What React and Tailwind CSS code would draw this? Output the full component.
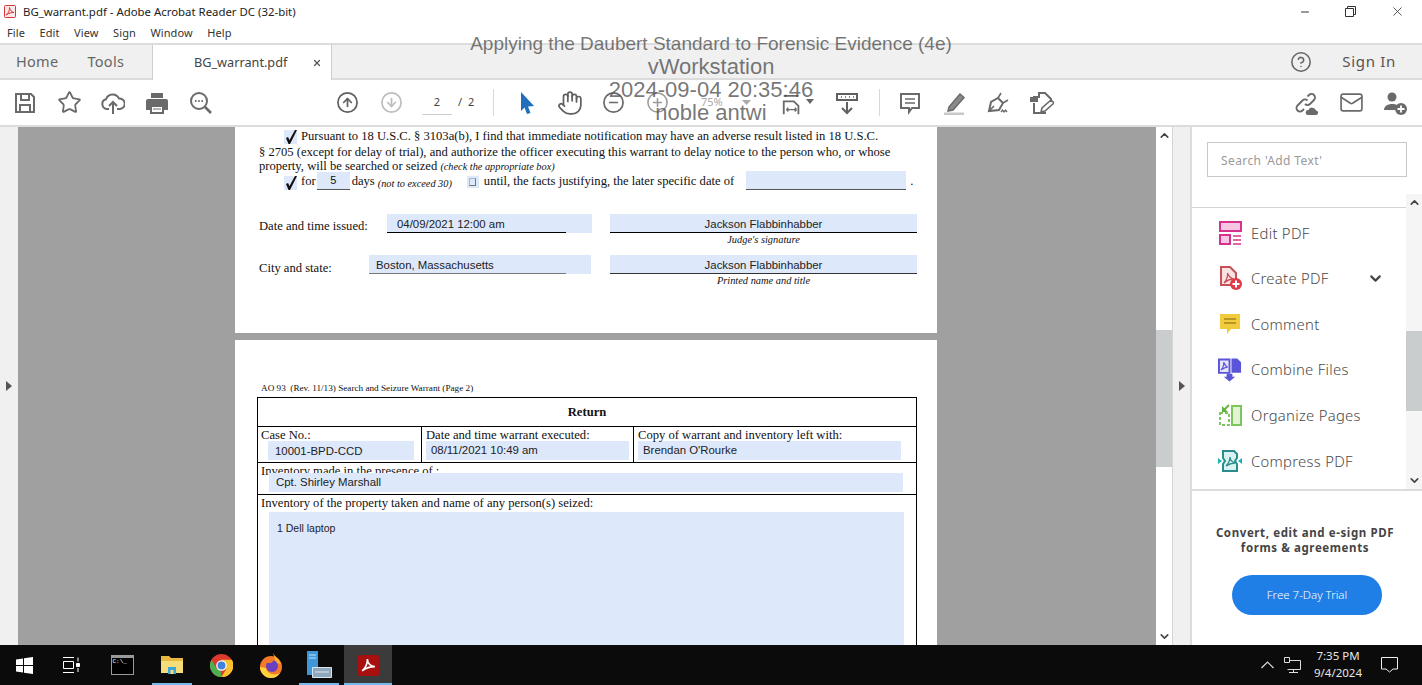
import { X, Minus, ChevronUp, ChevronDown, CircleArrowUp, CircleArrowDown, CircleMinus, CirclePlus, Hand, Star, CircleHelp, Mail } from 'lucide-react';

const uiFont = "font-['Noto_Sans',sans-serif]";
const serif = "font-['Liberation_Serif',serif]";
const arial = "font-['Liberation_Sans',sans-serif]";

function Cell({ children, className = '' }) {
  return <div className={`w-[44px] h-full flex items-center justify-center shrink-0 ${className}`}>{children}</div>;
}

function Glyph({ children, size = 24, view = 24, className = '' }) {
  return (
    <svg width={size} height={size} viewBox={`0 0 ${view} ${view}`} fill="none" stroke="#6a6a6a" strokeWidth="2" className={className}>
      {children}
    </svg>
  );
}

function Toolbar() {
  return (
    <div className="h-[47px] flex items-center pl-[3px] bg-white border-b-2 border-[#dcdcdc] shrink-0">
      <Cell>
        <Glyph>
          <path d="M3 3h15l3 3v15H3z" />
          <path d="M8 3v6h8V3M7 21v-7h10v7" />
        </Glyph>
      </Cell>
      <Cell><Star size={25} color="#6a6a6a" strokeWidth={1.7} /></Cell>
      <Cell>
        <Glyph>
          <path d="M8 18H6a5 5 0 0 1-1-9.8A7 7 0 0 1 18 7.5a5 5 0 0 1 1 10.5h-3" />
          <path d="M12 23V11M8 15l4-4 4 4" />
        </Glyph>
      </Cell>
      <Cell>
        <svg width="24" height="24" viewBox="0 0 24 24">
          <path fill="#6a6a6a" d="M6 2h12v5H6zM3 8h18a2 2 0 0 1 2 2v9h-4v-5H5v5H1v-9a2 2 0 0 1 2-2z" />
          <path fill="none" stroke="#6a6a6a" strokeWidth="2" d="M6 15h12v7H6z" />
          <path stroke="#6a6a6a" d="M8 18h8" />
        </svg>
      </Cell>
      <Cell>
        <Glyph>
          <circle cx="10" cy="10" r="8" />
          <path d="M16 16l6 6" strokeWidth="2.6" />
          <path d="M6 10h1.5M9.2 10h1.5M12.4 10h1.5" />
        </Glyph>
      </Cell>

      <Cell className="ml-[102px]"><CircleArrowUp size={23} color="#606060" strokeWidth={1.8} /></Cell>
      <Cell><CircleArrowDown size={23} color="#bdbdbd" strokeWidth={1.8} /></Cell>
      <div className={`w-[30px] h-[24px] ml-[9px] border-b border-[#cfcfcf] text-center text-[11px] leading-[22px] text-[#444] ${uiFont}`}>2</div>
      <span className={`ml-[6px] text-[11px] text-[#444] tracking-[1.5px] ${uiFont}`}>/ 2</span>
      <div className="w-px h-[27px] bg-[#d8d8d8] ml-[17px]" />

      <Cell className="ml-[11px]">
        <svg width="18" height="24" viewBox="0 0 18 24"><path fill="#1f6fbd" d="M3 1l13 14-6 .5L12.500 22 9 23 6.500 16.500 3 20z" /></svg>
      </Cell>
      <Cell className="-ml-px"><Hand size={26} color="#606060" strokeWidth={1.6} /></Cell>
      <Cell><CircleMinus size={23} color="#6a6a6a" strokeWidth={1.8} /></Cell>
      <Cell><CirclePlus size={23} color="#9a9a9a" strokeWidth={1.6} /></Cell>
      <div className={`w-[44px] ml-[10px] text-center text-[11px] text-[#aaa] ${uiFont}`}>75%</div>
      <svg width="9" height="5" viewBox="0 0 9 5" className="ml-[8px] mr-[30px]"><path fill="#aaa" d="M0 0h9L4.500 5z" /></svg>
      <Glyph size={22} className="mt-[4px]">
        <path d="M3 2h16M3 22V8h11l5 5v9" />
        <path d="M6 17h11M6 17l2-2M6 17l2 2M17 17l-2-2M17 17l-2 2" strokeWidth="1.500" />
      </Glyph>
      <svg width="8" height="5" viewBox="0 0 8 5" className="ml-[3px] mb-[2px]"><path fill="#666" d="M0 0h8L4 5z" /></svg>
      <Cell className="ml-[11px]">
        <svg width="24" height="24" viewBox="0 0 24 24" fill="none" stroke="#606060" strokeWidth="2">
          <path d="M2 3h20v6H2z" />
          <path d="M6 6h1M10 6h1M14 6h1M18 6h1" strokeWidth="1.500" />
          <path d="M12 11v11M7 17l5 5 5-5" />
        </svg>
      </Cell>
      <div className="w-px h-[27px] bg-[#d8d8d8] ml-[10px]" />
      <Cell className="ml-[8px]">
        <Glyph>
          <path d="M3 3h18v14h-7l-3 4v-4H3z" />
          <path d="M7 8h10M7 12h10" strokeWidth="1.500" />
        </Glyph>
      </Cell>
      <Cell>
        <Glyph>
          <path fill="#8a8a8a" stroke="#6a6a6a" strokeWidth="1.500" d="M7 16L18 3l4 3.500L11 19l-5 1z" />
          <path d="M2 23h20" stroke="#c8c8c8" strokeWidth="3" />
        </Glyph>
      </Cell>
      <Cell>
        <Glyph>
          <path d="M3 20l2-9 7-4 5 5-4 7z" />
          <path d="M12 7l3-5M17 12l5-3M3 20l5-5" strokeWidth="1.600" />
          <path d="M15 21l1.500-2 1.500 2 1.500-2 1.500 2" strokeWidth="1.300" />
        </Glyph>
      </Cell>
      <Cell>
        <Glyph>
          <path d="M4 12v10h12M4 8V6h5V2h6l6 6v3" />
          <path fill="#6a6a6a" stroke="none" d="M0 6h8v5H0z" />
          <path d="M11 21l1-4 9-8 3 3-9 8z" strokeWidth="1.600" />
        </Glyph>
      </Cell>

      <div className="flex-1" />
      <Cell>
        <Glyph>
          <path d="M9 18l-1.500 1.500a3.500 3.500 0 0 1-5-5l5-5a3.500 3.500 0 0 1 5 0M10 13a3.500 3.500 0 0 0 5 0l4-4a3.500 3.500 0 0 0-5-5l-1.500 1.500" strokeWidth="1.800" />
          <path fill="#6a6a6a" stroke="none" d="M13 24a2.500 2.500 0 0 1 .5-5 4 4 0 0 1 7.500 .5 2.300 2.300 0 0 1 .5 4.500z" />
        </Glyph>
      </Cell>
      <Cell><Mail size={25} color="#6a6a6a" strokeWidth={1.6} /></Cell>
      <Cell className="mr-[5px]">
        <svg width="24" height="24" viewBox="0 0 24 24">
          <circle cx="9" cy="6" r="4.500" fill="#6a6a6a" />
          <path fill="#6a6a6a" d="M1 19c0-4 4-6 8-6s5 1 6 2l-3 4z" />
          <circle cx="18" cy="18" r="6" fill="#6a6a6a" />
          <path stroke="#fff" strokeWidth="1.800" d="M18 14.500v7M14.500 18h7" />
        </svg>
      </Cell>
    </div>
  );
}

function Field({ children, className = '' }) {
  return <div className={`bg-[#dde8fb] text-[11.400px] leading-[19px] text-[#222] whitespace-nowrap ${arial} ${className}`}>{children}</div>;
}

function CheckMark() {
  return (
    <div className="w-[13px] h-[14px] bg-[#dde8fb] shrink-0 flex items-center justify-center">
      <svg width="12" height="14" viewBox="0 0 12 14"><path fill="#111" d="M1 8l2-1 1.500 3L10 0h2L5 14H3.500z" /></svg>
    </div>
  );
}

function PageOne() {
  return (
    <section className={`h-[206px] bg-white pl-[24px] pt-[2px] text-[12.600px] text-[#111] ${serif}`}>
      <div className="flex items-center h-[15px] pl-[25px] gap-[4px] whitespace-nowrap">
        <CheckMark />
        <span>Pursuant to 18 U.S.C. § 3103a(b), I find that immediate notification may have an adverse result listed in 18 U.S.C.</span>
      </div>
      <p className="h-[14px] leading-[14px] mt-[1px] whitespace-nowrap">§ 2705 (except for delay of trial), and authorize the officer executing this warrant to delay notice to the person who, or whose</p>
      <p className="h-[14px] leading-[14px] whitespace-nowrap">property, will be searched or seized <i className="text-[10.300px]">(check the appropriate box)</i></p>
      <div className="flex items-end h-[18px] -mt-px pl-[25px] whitespace-nowrap">
        <CheckMark />
        <span className="ml-[4px] -mb-px">for</span>
        <div className={`w-[33px] h-[18px] ml-px bg-[#dde8fb] border-b border-[#555] text-center text-[11px] leading-[16px] ${arial}`}>5</div>
        <span className="ml-[2px] -mb-px">days</span>
        <i className="ml-[3px] -mb-px text-[10.300px]">(not to exceed 30)</i>
        <div className="w-[12px] h-[12px] ml-[15px] mb-[2px] bg-[#dde8fb] flex items-center justify-center">
          <div className="w-[7px] h-[8px] border border-[#a9b7cc] border-r-[#777] border-b-[#777]" />
        </div>
        <span className="ml-[5px] -mb-px">until, the facts justifying, the later specific date of</span>
        <div className="w-[160px] h-[19px] ml-[12px] bg-[#dde8fb] border-b border-[#555]" />
        <span className="ml-[4px] -mb-px">.</span>
      </div>

      <div className="flex mt-[24px] h-[19px]">
        <span className="w-[128px] leading-[24px]">Date and time issued:</span>
        <Field className="w-[205px] pl-[10px] pt-px relative">
          04/09/2021 12:00 am
          <div className="absolute left-0 bottom-0 w-[179px] h-px bg-black" />
        </Field>
        <Field className="w-[307px] ml-[18px] pt-px text-center border-b border-black">Jackson Flabbinhabber</Field>
      </div>
      <div className="pl-[351px] w-[658px] text-center text-[10.400px] italic leading-[13px]">Judge's signature</div>

      <div className="flex mt-[9px] h-[19px]">
        <span className="w-[110px] leading-[26px]">City and state:</span>
        <Field className="w-[222px] pl-[7px] pt-px relative">
          Boston, Massachusetts
          <div className="absolute left-0 bottom-0 w-[197px] h-px bg-[#777]" />
        </Field>
        <Field className="w-[307px] ml-[19px] pt-px text-center border-b border-[#333]">Jackson Flabbinhabber</Field>
      </div>
      <div className="pl-[351px] w-[658px] text-center text-[10.400px] italic leading-[13px]">Printed name and title</div>
    </section>
  );
}

function PageTwo() {
  return (
    <section className={`h-[305px] mt-[7px] bg-white pt-[42px] pl-[22px] text-[12.600px] text-[#111] overflow-hidden ${serif}`}>
      <p className="pl-[4px] text-[9.200px] leading-[13px] whitespace-nowrap">AO 93 &nbsp;(Rev. 11/13) Search and Seizure Warrant (Page 2)</p>
      <div className="w-[660px] mt-[2px] border-t border-x border-black">
        <div className="h-[29px] pt-px flex items-center justify-center font-bold border-b border-black">Return</div>
        <div className="h-[36px] flex border-b border-black">
          <div className="w-[164px] border-r border-black pl-[3px]">
            <div className="leading-[14px] mt-px">Case No.:</div>
            <Field className="w-[146px] ml-[7px] mt-[-1px] pl-[7px] pt-px h-[19px]">10001-BPD-CCD</Field>
          </div>
          <div className="w-[212px] border-r border-black pl-[4px]">
            <div className="leading-[14px] mt-px">Date and time warrant executed:</div>
            <Field className="w-[203px] -mt-px pl-[5px] h-[19px]">08/11/2021 10:49 am</Field>
          </div>
          <div className="flex-1 pl-[4px]">
            <div className="leading-[14px] mt-px">Copy of warrant and inventory left with:</div>
            <Field className="w-[263px] -mt-px pl-[5px] h-[19px]">Brendan O'Rourke</Field>
          </div>
        </div>
        <div className="h-[32px] border-b border-black pl-[3px] overflow-hidden">
          <div className="leading-[14px] h-[9px] mt-px">Inventory made in the presence of :</div>
          <Field className="w-[634px] ml-[8px] pl-[7px] h-[19px] relative">Cpt. Shirley Marshall</Field>
        </div>
        <div className="pl-[3px]">
          <div className="leading-[14px] mt-px">Inventory of the property taken and name of any person(s) seized:</div>
          <Field className="w-[635px] ml-[8px] mt-[2px] pl-[8px] pt-[7px] h-[200px] !text-[10.500px]">1 Dell laptop</Field>
        </div>
      </div>
    </section>
  );
}

function Arrow({ dir }) {
  return dir === 'up'
    ? <ChevronUp size={13} color="#444" strokeWidth={3} />
    : <ChevronDown size={13} color="#444" strokeWidth={3} />;
}

function Caret() {
  return <div className="w-0 h-0 border-y-[5px] border-y-transparent border-l-[6px] border-l-[#555]" />;
}

function ToolIcon({ name }) {
  if (name === 'edit') return (
    <svg width="23" height="24" viewBox="0 0 23 24">
      <rect x="1" y="1" width="21" height="9" fill="#f7c6e2" stroke="#d6318c" strokeWidth="2" />
      <rect x="1" y="14" width="10" height="9" fill="#f7c6e2" stroke="#d6318c" strokeWidth="2" />
      <path stroke="#d6318c" strokeWidth="1.500" d="M14 15h8M14 19h8M14 23h8" />
    </svg>
  );
  if (name === 'create') return (
    <svg width="23" height="24" viewBox="0 0 23 24">
      <path fill="#fbe3e3" stroke="#c4525a" strokeWidth="2" d="M2 1h9l6 6v12H2z" />
      <path fill="none" stroke="#c4525a" strokeWidth="1.300" d="M5 17c3-3 4-8 3.500-10 1 3 3 5 6 6-3 0-6 1-9.500 4z" />
      <circle cx="17" cy="18" r="6" fill="#e03a46" />
      <path stroke="#fff" strokeWidth="2" d="M17 14.500v7M13.500 18h7" />
    </svg>
  );
  if (name === 'comment') return (
    <svg width="22" height="24" viewBox="0 0 22 24">
      <path fill="#f2cb3c" d="M1 2h20v15h-9l-4 5v-5H1z" />
      <path stroke="#a8861a" strokeWidth="1.500" d="M5 7h12M5 11h12" />
    </svg>
  );
  if (name === 'combine') return (
    <svg width="25" height="25" viewBox="0 0 25 25">
      <path fill="#e6e4fb" stroke="#5a55d8" strokeWidth="2" d="M1 2h11v14H1z" />
      <path fill="#5a55d8" d="M14 1h6l4 4v11H14z" />
      <path fill="none" stroke="#5a55d8" strokeWidth="1.200" d="M3 13c3-2 3-5 3-8 1 3 2 4 4 5-2 0-4 1-7 3z" />
      <path fill="#5a55d8" d="M9 17h6v3h3l-6 5-6-5h3z" />
    </svg>
  );
  if (name === 'organize') return (
    <svg width="23" height="22" viewBox="0 0 23 22">
      <rect x="13" y="2" width="9" height="19" fill="#e3f3d5" stroke="#7fc65a" strokeWidth="2" />
      <path fill="none" stroke="#7fc65a" strokeWidth="2" strokeDasharray="3 2" d="M1 9h9v12H1z" />
      <path stroke="#62b53c" strokeWidth="2" d="M10 1L5 6" />
      <path fill="#62b53c" d="M3 2v6h6z" />
    </svg>
  );
  return (
    <svg width="24" height="22" viewBox="0 0 24 22">
      <path fill="#d8f3f1" stroke="#2c8c8c" strokeWidth="2" d="M5 1h11l3 3v4l-2 3 2 3v7H5v-7l2-3-2-3z" />
      <path fill="none" stroke="#2c8c8c" strokeWidth="1.300" d="M8 16c3-3 4-6 4-9 0 3 2 5 5 6-3 0-6 1-9 3z" />
      <path fill="#17b5b5" d="M0 8l4 3-4 3zM24 8l-4 3 4 3z" />
    </svg>
  );
}

const tools = [
  ['edit', 'Edit PDF'],
  ['create', 'Create PDF'],
  ['comment', 'Comment'],
  ['combine', 'Combine Files'],
  ['organize', 'Organize Pages'],
  ['compress', 'Compress PDF'],
];

function SidePanel() {
  return (
    <aside className={`w-[232px] shrink-0 bg-white border-l-2 border-[#dcdcdc] flex flex-col ${uiFont}`}>
      <div className="h-[81px] shrink-0 pl-[15px] pt-[15px] border-b border-[#d4d4d4] relative">
        <div className="w-[200px] h-[35px] border border-[#c8c8c8] pl-[13px] text-[12px] leading-[35px] tracking-[0.4px] text-[#999]">Search 'Add Text'</div>
      </div>
      <div className="h-[283px] shrink-0 flex border-b-2 border-[#dcdcdc]">
        <ul className="flex-1 pt-[2px]">
          {tools.map(([icon, label]) => (
            <li key={label} className="h-[45.600px] flex items-center pl-[26px]">
              <div className="w-[24px] flex justify-center"><ToolIcon name={icon} /></div>
              <span className="ml-[9px] text-[14.800px] font-light tracking-[0.3px] text-[#4a4a4a]">{label}</span>
              {icon === 'create' && <ChevronDown size={17} strokeWidth={3} color="#444" className="ml-[38px]" />}
            </li>
          ))}
        </ul>
        <div className="w-[16px] -mt-[14px] bg-[#f5f5f5] flex flex-col items-center relative z-10">
          <div className="h-[17px] flex items-center"><Arrow dir="up" /></div>
          <div className="w-full h-[80px] mt-[120px] bg-[#c9cdcd]" />
          <div className="flex-1" />
          <div className="h-[17px] flex items-center"><Arrow dir="down" /></div>
        </div>
      </div>
      <div className="flex-1 flex flex-col items-center">
        <p className="mt-[34px] pr-[4px] text-[11.500px] leading-[15px] font-bold tracking-[0.6px] text-center text-[#444]">
          Convert, edit and e-sign PDF<br />forms &amp; agreements
        </p>
        <button className="mt-[20px] w-[150px] h-[40px] rounded-full bg-[#1f7fe6] text-white text-[11.500px] font-light">Free 7-Day Trial</button>
      </div>
    </aside>
  );
}

function Taskbar() {
  const underline = 'absolute left-0 right-0 bottom-0 h-[2px] bg-[#76b9ed]';
  return (
    <footer className="h-[40px] shrink-0 bg-[#0b0b0b] flex items-center relative">
      <div className="w-[48px] h-full flex items-center justify-center">
        <svg width="17" height="17" viewBox="0 0 17 17"><path fill="#fff" d="M0 2.500l7-1V8H0zM8 1.300L17 0v8H8zM0 9h7v6.500l-7-1zM8 9h9v8l-9-1.300z" /></svg>
      </div>
      <div className="w-[46px] h-full flex items-center justify-center">
        <svg width="17" height="16" viewBox="0 0 17 16" fill="none" stroke="#fff"><path d="M0 .500h11M0 15.500h11M.500 4.500h10v7H.500zM15 .500v4M15 11v4" /><path fill="#fff" d="M13.500 6.500h3v3h-3z" /></svg>
      </div>
      <div className="w-[50px] h-full flex items-center justify-center ml-[3px]">
        <div className="w-[23px] h-[20px] bg-black border border-[#999] border-t-[3px] text-[6px] leading-[7px] text-white font-mono pl-[1px]">C:\_</div>
      </div>
      <div className="w-[50px] h-full flex items-center justify-center relative">
        <svg width="22" height="20" viewBox="0 0 22 20">
          <path fill="#e8b93c" d="M0 1h8l2 2h12v15H0z" />
          <path fill="#f7dd7a" d="M0 6h22v12H0z" />
          <path fill="#3fa4d8" d="M7 12h8v7H7z" />
          <path fill="#f7dd7a" d="M9.500 15h3v4h-3z" />
        </svg>
        <div className={`${underline} mx-[5px]`} />
      </div>
      <div className="w-[49px] h-full flex items-center justify-center">
        <svg width="23" height="23" viewBox="0 0 24 24">
          <circle cx="12" cy="12" r="12" fill="#dd3a2e" />
          <path fill="#4caf50" d="M12 24A12 12 0 0 1 1.600 6L7 15.500l4 1.500z" />
          <path fill="#fbc02d" d="M12 24l5-8.500L12 6h10.800A12 12 0 0 1 12 24z" />
          <circle cx="12" cy="12" r="5.500" fill="#fff" />
          <circle cx="12" cy="12" r="4.200" fill="#3f82e0" />
        </svg>
      </div>
      <div className="w-[49px] h-full flex items-center justify-center">
        <svg width="24" height="25" viewBox="0 0 24 25">
          <circle cx="12" cy="14" r="11" fill="#f5792a" />
          <path fill="#ffb324" d="M14 0c1 3 6 5 8 11l-5-1z" />
          <path fill="#ffd23c" d="M1 14c0 6 5 11 11 11 4 0 7-2 9-5-5 3-13 1-14-5z" />
          <circle cx="13" cy="13" r="6" fill="#6a3fc0" />
          <path fill="#f5792a" d="M6 7h9l-3 3H7z" />
        </svg>
      </div>
      <div className="w-[48px] h-full flex items-center justify-center relative">
        <svg width="25" height="28" viewBox="0 0 25 28">
          <path fill="#3e97d8" d="M0 0h11v24H0z" />
          <path stroke="#bfe0f5" strokeWidth="1" d="M2 4h7M2 7h7" />
          <path fill="#8fa8bc" stroke="#dce6ee" d="M5.500 16.500h19v10h-19z" />
          <path stroke="#dce6ee" d="M8 21h14" />
        </svg>
        <div className={`${underline} mx-[4px]`} />
      </div>
      <div className="w-[48px] h-full flex items-center justify-center relative bg-[#3b3b3b] ml-px">
        <div className="w-[21px] h-[21px] rounded-[2px] bg-[#a80f0f] flex items-center justify-center">
          <svg width="15" height="15" viewBox="0 0 14 14" fill="none" stroke="#fff" strokeWidth="1.500"><path d="M1 12c4-3 5-8 5-11 0 4 3 7 7 7-4 0-8 1-12 4z" /></svg>
        </div>
        <div className={underline} />
      </div>

      <div className="flex-1" />
      <svg width="13" height="8" viewBox="0 0 13 8" fill="none" stroke="#ddd" strokeWidth="1.200"><path d="M.5 7l6-6 6 6" /></svg>
      <svg width="17" height="16" viewBox="0 0 17 16" fill="none" stroke="#ddd" className="ml-[10px]">
        <path d="M3.500 3.500H16.500V12.500H3.500M9.500 12.500v3M5 15.500h9" />
        <path fill="#0b0b0b" d="M.500 .500h5v5h-5z" />
      </svg>
      <div className={`w-[60px] ml-[7px] mb-[2px] text-center text-[11.500px] leading-[17px] text-[#e6e6e6] ${uiFont}`}>
        7:35 PM<br />9/4/2024
      </div>
      <div className="w-[54px] pr-[12px] flex justify-center">
        <svg width="17" height="16" viewBox="0 0 17 16" fill="none" stroke="#eee"><path d="M.500 .500h16v11.500h-4.500L8.500 15 5 12H.500z" /></svg>
      </div>
    </footer>
  );
}

export default function App() {
  return (
    <div className="w-[1422px] h-[685px] overflow-hidden flex flex-col relative bg-white">
      {/* Title bar + menu */}
      <div className={`h-[23px] flex items-center pl-[4px] shrink-0 text-[11.400px] text-[#222] ${uiFont}`}>
        <svg width="12" height="13" viewBox="0 0 12 13">
          <rect x=".5" y=".5" width="11" height="12" rx="1" fill="#fbeaea" stroke="#d9343a" />
          <path fill="none" stroke="#d9343a" d="M2 10c3-2 3.500-5 3.500-7.500C6 5 7.500 7 10 7.500 7.500 7.500 5 8 2 10z" />
        </svg>
        <span className="ml-[7px]">BG_warrant.pdf - Adobe Acrobat Reader DC (32-bit)</span>
        <div className="flex-1" />
        <Minus size={12} color="#333" />
        <svg width="11" height="11" viewBox="0 0 11 11" fill="none" stroke="#333" className="ml-[34px]"><path d="M.500 2.500h8v8h-8zM2.500 2.500v-2h8v8h-2" /></svg>
        <X size={15} color="#333" strokeWidth={1.3} className="ml-[34px] mr-[17px]" />
      </div>
      <nav className={`h-[20px] flex items-center pl-[7px] gap-[14.500px] shrink-0 text-[11px] text-[#333] tracking-[0.1px] ${uiFont}`}>
        {['File', 'Edit', 'View', 'Sign', 'Window', 'Help'].map(m => <span key={m}>{m}</span>)}
      </nav>

      {/* Tabs */}
      <div className={`h-[37px] shrink-0 flex items-stretch bg-[#f0f0f0] border-y-2 border-[#dcdcdc] ${uiFont}`}>
        <div className="w-[152px] flex items-center pl-[16px] gap-[29px] text-[14.500px] tracking-[0.3px] text-[#666]">
          <span>Home</span><span>Tools</span>
        </div>
        <div className="w-[180px] bg-white border-x border-[#cfcfcf] -mb-[2px] flex items-center pl-[41px] text-[12.700px] text-[#444] relative">
          BG_warrant.pdf
          <X size={10} color="#555" strokeWidth={3} className="ml-[25px]" />
        </div>
        <div className="flex-1" />
        <CircleHelp size={22} color="#666" strokeWidth={1.7} className="self-center" />
        <span className="self-center ml-[30px] mr-[26px] text-[15px] tracking-[0.7px] text-[#555]">Sign In</span>
      </div>

      <Toolbar />

      {/* Document area */}
      <div className="flex-1 flex min-h-0">
        <div className="w-[18px] bg-[#f0f0f0] flex items-center justify-center"><Caret /></div>
        <main className="w-[1138px] bg-[#a0a0a0] pl-[217px] pr-[219px] overflow-hidden">
          <PageOne />
          <PageTwo />
        </main>
        <div className="w-[16px] bg-white flex flex-col items-center">
          <div className="h-[17px] flex items-center"><Arrow dir="up" /></div>
          <div className="w-full h-[137px] mt-[186px] bg-[#c9cdcd]" />
          <div className="flex-1" />
          <div className="h-[17px] flex items-center"><Arrow dir="down" /></div>
        </div>
        <div className="w-[18px] bg-[#f0f0f0] border-l border-[#d4d4d4] flex items-center justify-center"><Caret /></div>
        <SidePanel />
      </div>

      <Taskbar />

      {/* Session watermark */}
      <div className={`absolute top-[32px] left-0 w-full text-center text-[22px] leading-[23px] text-[#4a4a4a]/75 pointer-events-none ${arial}`}>
        <p className="text-[19px]">Applying the Daubert Standard to Forensic Evidence (4e)</p>
        <p>vWorkstation</p>
        <p>2024-09-04 20:35:46</p>
        <p>noble antwi</p>
      </div>
    </div>
  );
}
